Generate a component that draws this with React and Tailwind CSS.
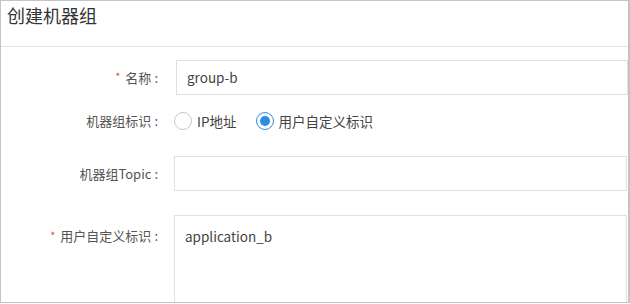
const font = { fontFamily: '"Noto Sans CJK SC", "Noto Sans", sans-serif' };

// --- Form label, right-aligned with optional required mark ---
const Label = ({ required, children }) => (
  <div className="w-[160px] shrink-0 flex items-center justify-end pr-[2px] text-[13px] text-[#555]">
    {required && <span className="text-[#e94b4b] text-[11px] mr-[5px] relative -top-[1px]">*</span>}
    <span>{children}</span>
    <span className="ml-[3px] mr-[1px]">:</span>
  </div>
);

const Radio = ({ checked, label }) => (
  <label className="flex items-center gap-[5px] text-[13.5px] text-[#444]">
    <span
      className={
        checked
          ? "w-[18px] h-[18px] rounded-full border border-[#2b8ee0] flex items-center justify-center"
          : "w-[18px] h-[18px] rounded-full border border-[#c9c9c9]"
      }
    >
      {checked && <span className="w-[10px] h-[10px] rounded-full bg-[#2b8ee0]"></span>}
    </span>
    <span>{label}</span>
  </label>
);

export default function App() {
  return (
    <div className="w-[630px] h-[304px] bg-white" style={font}>
      <div className="w-[630px] h-[303px] border-l border-t border-b border-r-2 border-[#c4c4c4] overflow-hidden">
        {/* Header */}
        <div className="h-[46px] border-b border-[#e3e3e3] flex items-center pl-[6px] pb-[20px] pt-[2px]">
          <h2 className="text-[18px] text-[#333] leading-none">创建机器组</h2>
        </div>

        {/* Form */}
        <div className="flex flex-col pt-[13px]">
          <div className="flex items-center h-[35px]">
            <Label required>名称</Label>
            <div className="ml-[15px] w-[452px] h-[35px] border border-[#e0e0e0] flex items-center pl-[10px] text-[13.5px] text-[#444]">
              group-b
            </div>
          </div>

          <div className="flex items-center h-[24px] mt-[14px]">
            <Label>机器组标识</Label>
            <div className="ml-[13px] flex items-center gap-[19px]">
              <Radio label="IP地址" />
              <Radio checked label="用户自定义标识" />
            </div>
          </div>

          <div className="flex items-center h-[35px] mt-[23px]">
            <Label>机器组Topic</Label>
            <div className="ml-[13px] w-[453px] h-[35px] border border-[#e0e0e0]"></div>
          </div>

          <div className="flex items-start mt-[24px]">
            <div className="h-[42px] flex items-center">
              <Label required>用户自定义标识</Label>
            </div>
            <div className="ml-[13px] w-[453px] h-[100px] border border-[#e0e0e0] pl-[10px] pt-[10px] text-[13.5px] text-[#444] leading-[20px]">
              application_b
            </div>
          </div>
        </div>
      </div>
    </div>
  );
}
